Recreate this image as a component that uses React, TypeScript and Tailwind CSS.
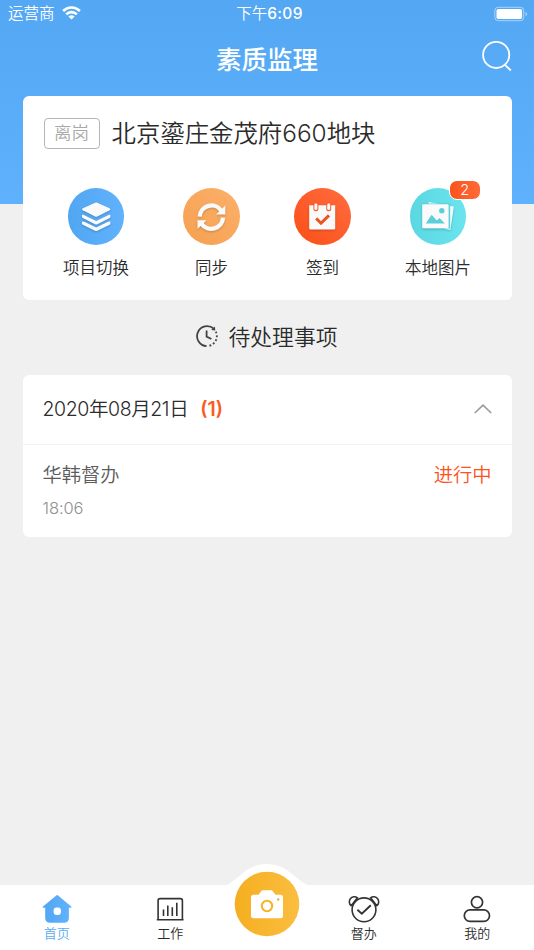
import type { ReactNode } from "react";

interface Action {
  label: string;
  circle: string;
  icon: ReactNode;
  badge?: number;
}

interface TabProps {
  label: string;
  active?: boolean;
  children: ReactNode;
}

const shadow = "drop-shadow-[0_1px_1px_rgba(0,0,0,0.2)]";

const actions: Action[] = [
  {
    label: "项目切换",
    circle: "bg-gradient-to-r from-[#51a6f2] to-[#61b2fd]",
    icon: (
      <svg className={shadow} width="56" height="56" viewBox="0 0 56 56" fill="#fafafa">
        <path d="M27.1 14.7Q28.2 14.2 29.3 14.7L41.5 20.3Q43.2 21.3 41.5 22.3L29.3 28.6Q28.2 29.1 27.1 28.6L14.9 22.3Q13.2 21.3 14.9 20.3Z" />
        <path d="M14 26.9Q15.4 26.7 16.8 27.5L28.2 33 39.6 27.5Q41 26.7 42.4 26.9V29Q42.4 29.7 41.6 30.1L29.3 36.3Q28.2 36.8 27.1 36.3L14.8 30.1Q14 29.7 14 29Z" />
        <path d="M14 33.5Q15.4 33.3 16.8 34.1L28.2 39.6 39.6 34.1Q41 33.3 42.4 33.5V35.6Q42.4 36.3 41.6 36.7L29.3 42.7Q28.2 43.2 27.1 42.7L14.8 36.7Q14 36.3 14 35.6Z" />
      </svg>
    ),
  },
  {
    label: "同步",
    circle: "bg-gradient-to-tr from-[#f4a04f] to-[#fdb06a]",
    icon: (
      <svg className={shadow} width="56" height="56" viewBox="0 0 56 56">
        <g fill="none" stroke="#fafafa" strokeWidth="4.4">
          <path d="M16.7 28.6A11.8 11.8 0 0 1 38.4 22.8" />
          <path d="M40 29.6A11.8 11.8 0 0 1 18.3 35.4" />
        </g>
        <path fill="#fafafa" d="M42.3 17.4V26.4H33.2ZM14.5 41V32.3H23.6Z" />
      </svg>
    ),
  },
  {
    label: "签到",
    circle: "bg-gradient-to-tr from-[#fb4e12] to-[#ff6c3d]",
    icon: (
      <svg className={shadow} width="56" height="56" viewBox="0 0 56 56">
        <path fill="#fafafa" d="M15.2 17.2H41.2V40.6Q41.2 41.4 40.4 41.4H16Q15.2 41.4 15.2 40.6Z" />
        <rect x="19.4" y="14.6" width="5" height="8.6" rx="2.5" fill="#fd5c28" />
        <rect x="32.2" y="14.6" width="5" height="8.6" rx="2.5" fill="#fd5c28" />
        <rect x="20.4" y="15.2" width="3" height="6.8" rx="1.5" fill="#fafafa" />
        <rect x="33.2" y="15.2" width="3" height="6.8" rx="1.5" fill="#fafafa" />
        <path d="M22.2 30.4L27 35.2 35 27.4" fill="none" stroke="#e9551f" strokeWidth="3" />
      </svg>
    ),
  },
  {
    label: "本地图片",
    circle: "bg-gradient-to-r from-[#5bd7e2] to-[#6ae5ef]",
    badge: 2,
    icon: (
      <svg className={shadow} width="56" height="56" viewBox="0 0 56 56">
        <path fill="#f6fdfd" d="M18.6 14.1L43.2 18.4Q43.8 18.6 43.7 19.2L40.5 41.2Q40.4 41.9 39.7 41.8L35.4 41 18.4 15Z" />
        <path fill="#5bcfda" d="M12 15.6H38.8Q40.2 15.6 40.2 17V40.6H13Z" />
        <rect x="12.2" y="16.2" width="26.4" height="24" rx="1" fill="#fafafa" />
        <path d="M15.8 35.4L21.6 26.7 26.8 32.4 29.6 29.9 34.8 35.4Z" fill="#59cfda" />
        <circle cx="31.8" cy="22.7" r="2.7" fill="#59cfda" />
      </svg>
    ),
  },
];

function StatusBar() {
  return (
    <div className="flex h-7 items-center px-2 text-[15.5px] text-white">
      <div className="flex flex-1 items-center gap-[7px]">
        <span className="leading-7">运营商</span>
        <svg className="-mt-0.5" width="19" height="14" viewBox="0 0 19 14" fill="none" stroke="#fff" strokeWidth="2.6">
          <path d="M1.1 5A11.9 11.9 0 0 1 17.9 5" />
          <path d="M4.2 8.4A7.4 7.4 0 0 1 14.8 8.4" />
          <path d="M6.4 10.4Q9.5 8.2 12.6 10.4L9.5 13.6Z" fill="#fff" stroke="none" />
        </svg>
      </div>
      <span className="ml-[5px] leading-7">
        下午<span className="font-medium tracking-[0.3px]">6:09</span>
      </span>
      <div className="flex flex-1 justify-end">
        <svg className="-mr-0.5 -mt-px" width="34" height="16" viewBox="0 0 34 16">
          <rect x="0.8" y="1.3" width="29" height="13.4" rx="3.4" fill="none" stroke="#fff" strokeOpacity="0.5" />
          <rect x="2.5" y="3" width="25.6" height="10" rx="1.8" fill="#fff" />
          <path d="M31.6 5.8Q33.2 6.6 33.2 8T31.6 10.2Z" fill="#fff" fillOpacity="0.5" />
        </svg>
      </div>
    </div>
  );
}

function ActionItem({ label, circle, icon, badge }: Action) {
  return (
    <div className="flex flex-col items-center">
      <div className={`relative size-[56.5px] rounded-full ${circle}`}>
        {icon}
        {badge !== undefined && (
          <span className="absolute -top-[8px] left-[39px] flex h-5 w-8 items-center justify-center rounded-[8px] border border-white bg-gradient-to-r from-[#fb531a] to-[#ff6937] text-[14.5px] font-light text-white">
            {badge}
          </span>
        )}
      </div>
      <span className="mt-[11px] text-[16.5px] leading-6 text-[#2b2b2b]">{label}</span>
    </div>
  );
}

function Tab({ label, active, children }: TabProps) {
  return (
    <div className="flex flex-1 flex-col items-center pt-2">
      {children}
      <span className={`text-[13px] leading-4 ${active ? "text-[#5aacf8]" : "text-[#2b2b2b]"}`}>{label}</span>
    </div>
  );
}

export default function App() {
  return (
    <div className="flex h-[950px] w-[534px] flex-col overflow-hidden bg-[#f0f0f0] font-[Inter,'Noto_Sans_CJK_SC',sans-serif] font-[350]">
      <header className="h-[204px] shrink-0 bg-gradient-to-b from-[#53a7f3] to-[#5fb1fd]">
        <StatusBar />
        <div className="flex h-[68px] items-center px-[22px] pb-1">
          <div className="w-8" />
          <h1 className="flex-1 text-center text-[25.5px] font-medium leading-9 text-white">素质监理</h1>
          <svg className="-mt-2" width="32" height="32" viewBox="0 0 32 32" fill="none" stroke="#fff" strokeWidth="1.8">
            <circle cx="16.2" cy="14.9" r="13.1" />
            <path d="M24.8 24.6L30.8 30.5" />
          </svg>
        </div>
      </header>

      <main className="-mt-[108.5px] flex-1 px-[22.5px]">
        {/* Current project */}
        <section className="h-[204px] rounded-md bg-white pt-[22px]">
          <div className="flex h-[31px] items-center pl-[21px]">
            <span className="flex h-[31px] w-[56px] items-center justify-center rounded border-[1.5px] border-[#b5b5b5] text-[17.5px] text-[#aaa]">
              离岗
            </span>
            <h2 className="ml-3 text-[24.4px] leading-8 text-[#2b2b2b]">
              北京鎏庄金茂府<span className="font-light">660</span>地块
            </h2>
          </div>
          <div className="mt-[39.5px] flex justify-between px-[40.5px]">
            {actions.map((action) => (
              <ActionItem key={action.label} {...action} />
            ))}
          </div>
        </section>

        <div className="flex h-[75px] items-center justify-center gap-[10px] pr-[2px]">
          <svg className="-mt-0.5" width="24" height="24" viewBox="0 0 24 24" fill="none" stroke="#444" strokeWidth="1.8">
            <path d="M11.6 22.1A10 10 0 1 1 18.8 4.7" />
            <path d="M20 2.4L20.2 6.4 16.2 6Z" fill="#444" stroke="none" />
            <path d="M20.8 7.6A10 10 0 0 1 13 22" strokeDasharray="1.9 2" />
            <path d="M11.6 6.6V12.6L16.4 15" />
          </svg>
          <h3 className="text-[21.8px] leading-8 text-[#2b2b2b]">待处理事项</h3>
        </div>

        {/* Pending items */}
        <section className="rounded-md bg-white">
          <div className="flex h-[70px] items-center justify-between border-b border-[#f2f2f2] px-5">
            <div className="flex items-center text-[19.5px] leading-8">
              <span className="tracking-[-0.4px] text-[#2b2b2b]">2020年08月21日</span>
              <span className="ml-3 font-semibold text-[#fb5a20]">(1)</span>
            </div>
            <svg width="18" height="10" viewBox="0 0 18 10" fill="none" stroke="#999" strokeWidth="1.6">
              <path d="M0.8 9L9 1.2 17.2 9" />
            </svg>
          </div>
          <div className="h-[92.5px] px-5 pt-[15px]">
            <div className="flex justify-between text-[19.3px] leading-[30px]">
              <span className="text-[#5c5c5c]">华韩督办</span>
              <span className="text-[#fb5220]">进行中</span>
            </div>
            <p className="mt-[6px] text-[16.5px] leading-6 tracking-[-0.1px] text-[#8f8f8f]">18:06</p>
          </div>
        </section>
      </main>

      <nav className="relative flex h-[65px] shrink-0 bg-white">
        <Tab label="首页" active>
          <svg width="32" height="32" viewBox="0 0 32 32">
            <defs>
              <linearGradient id="home">
                <stop stopColor="#51a6f2" />
                <stop offset="1" stopColor="#62b3fd" />
              </linearGradient>
            </defs>
            <path
              fill="url(#home)"
              d="M15.3 2.4Q16.2 1.8 17.1 2.4L30.2 13.4Q31.2 14.6 29.8 14.8H27.9V24.8Q27.9 29.8 22.9 29.8H9.2Q4.2 29.8 4.2 24.8V14.8H2.4Q1 14.6 2 13.4Z"
            />
            <rect x="12.6" y="14.5" width="7.4" height="7.4" rx="3.2" fill="#fff" />
          </svg>
        </Tab>
        <Tab label="工作">
          <svg width="32" height="32" viewBox="0 0 32 32" fill="none" stroke="#333" strokeWidth="1.6">
            <path d="M4.1 26.6V7.6Q4.1 5.6 6.1 5.6H26.4Q28.4 5.6 28.4 7.6V26.6M2.8 26.7H29.6" />
            <path d="M9.5 16.4V22.9M13.8 12.4V22.9M18.3 14.3V22.9M22.8 9.7V22.9" />
          </svg>
        </Tab>
        <div className="w-20" />
        <Tab label="督办">
          <svg width="32" height="32" viewBox="0 0 32 32" fill="none" stroke="#333" strokeWidth="1.6">
            <circle cx="16" cy="16.8" r="11.9" />
            <path d="M3.2 12.7A5 5 0 0 1 9.4 4.8ZM28.8 12.7A5 5 0 0 0 22.6 4.8Z" />
            <path d="M9.4 16.8L13.8 20.7 22.8 12.2" strokeWidth="1.9" />
          </svg>
        </Tab>
        <Tab label="我的">
          <svg width="32" height="32" viewBox="0 0 32 32" fill="none" stroke="#333" strokeWidth="1.7">
            <circle cx="16" cy="9.3" r="5.6" />
            <rect x="3.3" y="16.9" width="25.2" height="11.5" rx="5.7" />
          </svg>
        </Tab>

        {/* Raised camera button */}
        <svg className="absolute -top-[21px] left-[227px]" width="80" height="86" viewBox="0 0 80 86">
          <defs>
            <linearGradient id="camera">
              <stop stopColor="#f5ae20" />
              <stop offset="1" stopColor="#fbbe40" />
            </linearGradient>
          </defs>
          <path d="M0 21Q4 19 13 11.5 25 0 40 0T67 11.5Q76 19 80 21V86H0Z" fill="#fff" />
          <circle cx="40" cy="40" r="32.3" fill="url(#camera)" />
          <path
            d="M27 30.8H31.5L34.4 27Q34.9 26.3 35.8 26.3H44.2Q45.1 26.3 45.6 27L48.5 30.8H53.5Q56 30.8 56 33.3V51.8Q56 54.3 53.5 54.3H26.5Q24 54.3 24 51.8V33.3Q24 30.8 26.5 30.8Z"
            fill="#fff"
          />
          <circle cx="40" cy="42" r="5.2" fill="none" stroke="#f6b32c" strokeWidth="2.1" />
          <circle cx="51.2" cy="35.5" r="1.2" fill="#f6a92c" />
        </svg>
      </nav>
    </div>
  );
}
